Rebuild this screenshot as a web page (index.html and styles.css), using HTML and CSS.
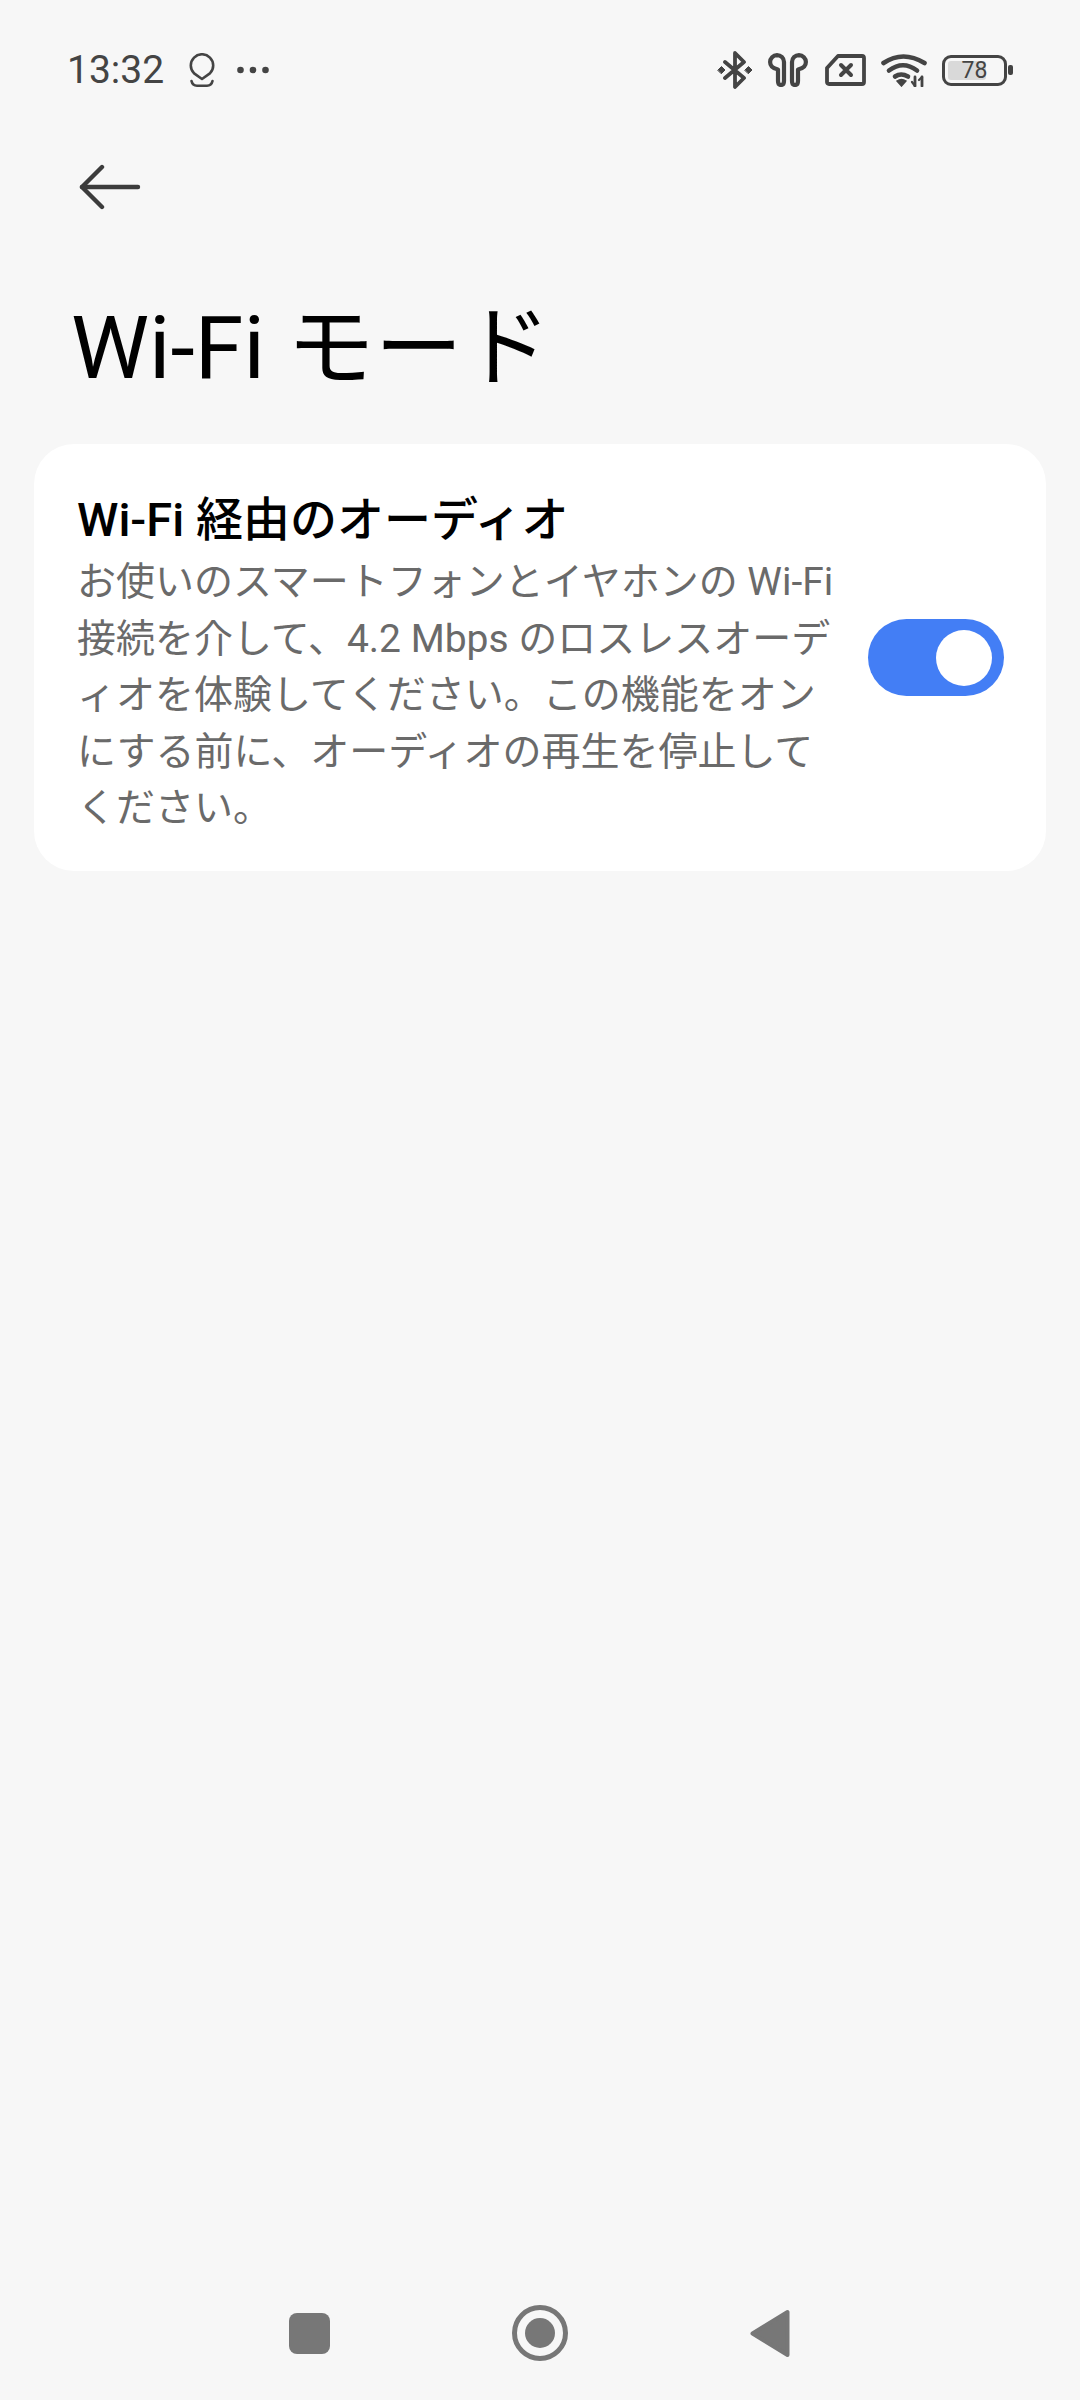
FILE: index.html
```html
<!DOCTYPE html>
<html lang="ja">
<head>
<meta charset="utf-8">
<title>Wi-Fi モード</title>
<link rel="stylesheet" href="styles.css">
</head>
<body>
<div class="screen">
  <header class="status">
    <div class="status-left">
      <span class="time">13:32</span>
      <svg class="ic-pin" width="26" height="34" viewBox="0 0 26 34" fill="none" stroke="#444" stroke-width="2.6" stroke-linecap="round" stroke-linejoin="round"><path d="M13 26 L5.100 20.400 A11.200 11.200 0 1 1 20.900 20.400 Z"/><path d="M2.500 28 Q3.500 32.700 8 32.700 H18 Q22.500 32.700 23.500 28"/></svg>
      <svg class="ic-dots" width="32" height="8" viewBox="0 0 32 8" fill="#444"><circle cx="3.500" cy="4" r="3.300"/><circle cx="16" cy="4" r="3.300"/><circle cx="28.500" cy="4" r="3.300"/></svg>
    </div>
    <div class="status-right">
      <svg width="36" height="38" viewBox="0 0 36 38" fill="none" stroke="#444" stroke-width="3.800" stroke-linejoin="round" stroke-linecap="round"><path d="M8 11 L27 27 L18 36 V2 L27 11 L8 27"/><path d="M1 19 l3.500-3.500 3.500 3.500-3.500 3.500z M28 19 l3.500-3.500 3.500 3.500-3.500 3.500z" fill="#444" stroke-width="1"/></svg>
      <svg width="40" height="34" viewBox="0 0 40 34" fill="none" stroke="#444" stroke-width="4.200" stroke-linecap="round" stroke-linejoin="round"><path d="M9 2.100 A7 7 0 0 0 2.100 9 C2.100 13 5 15.500 10 16.500 V28 Q10 32 13 32 Q16 32 16 28 V9 A7 7 0 0 0 9 2.100 Z"/><path d="M31 2.100 A7 7 0 0 1 37.900 9 C37.900 13 35 15.500 30 16.500 V28 Q30 32 27 32 Q24 32 24 28 V9 A7 7 0 0 1 31 2.100 Z"/></svg>
      <svg class="ic-sim" width="41" height="32" viewBox="0 0 41 32" fill="none" stroke="#444" stroke-width="3.800" stroke-linecap="round" stroke-linejoin="round"><path d="M13 2 H37 Q39 2 39 4 V28 Q39 30 37 30 H4 Q2 30 2 28 V14 Z"/><path d="M16 11 L26 21 M26 11 L16 21" stroke-width="4"/></svg>
      <svg width="46" height="34" viewBox="0 0 46 34" fill="none" stroke="#444" stroke-width="4.600" stroke-linecap="round"><path d="M2.500 10 Q22 -3 43.500 10"/><path d="M8 17.500 Q22 7 36 17.500"/><path d="M14 23.500 Q20 19.500 27 23.500"/><path d="M16 28 L20.500 33 L25 28 Q20.500 25 16 28Z" fill="#444" stroke-width="1.500"/><path d="M34 24 V33 M41 24 V33" stroke-width="2.800"/><path d="M31 29 L34 33 M38 27 L41 24" stroke-width="2.200"/></svg>
      <div class="battery">
        <div class="battery-body"><span class="battery-fill"></span><span class="battery-num">78</span></div>
        <span class="battery-cap"></span>
      </div>
    </div>
  </header>

  <nav class="topbar">
    <svg width="64" height="46" viewBox="0 0 64 46" fill="none" stroke="#3c3c3c" stroke-width="4.400" stroke-linecap="round" stroke-linejoin="round"><path d="M23 3 L3 23 L23 43"/><path d="M3 23 H59"/></svg>
  </nav>

  <h1 class="title">Wi-Fi モード</h1>

  <section class="card">
    <div class="card-text">
      <h2 class="card-title">Wi-Fi 経由のオーディオ</h2>
      <p class="card-desc">お使いのスマートフォンとイヤホンの Wi-Fi<br>接続を介して、4.2 Mbps のロスレスオーデ<br>ィオを体験してください。この機能をオン<br>にする前に、オーディオの再生を停止して<br>ください。</p>
    </div>
    <div class="toggle"><span class="knob"></span></div>
  </section>

  <footer class="navbar">
    <span class="nav-square"></span>
    <svg width="56" height="56" viewBox="0 0 56 56"><circle cx="28" cy="28" r="25.500" fill="none" stroke="#777" stroke-width="5"/><circle cx="28" cy="28" r="15" fill="#777"/></svg>
    <svg width="40" height="49" viewBox="0 0 40 49"><path d="M37.500 3 V46 L2.500 24.500 Z" fill="#777" stroke="#777" stroke-width="4" stroke-linejoin="round"/></svg>
  </footer>
</div>
</body>
</html>
```

FILE: styles.css
```css
* { box-sizing: border-box; }
html, body { margin: 0; padding: 0; }
body {
  background: #f7f7f7;
  font-family: Roboto, "Noto Sans CJK JP", sans-serif;
}
.screen {
  width: 1080px;
  height: 2400px;
  display: flex;
  flex-direction: column;
  background: #f7f7f7;
}
.status {
  height: 70px;
  margin-top: 35px;
  padding: 0 67px 0 67px;
  display: flex;
  align-items: center;
  justify-content: space-between;
}
.status-left { display: flex; align-items: center; }
.time { font-size: 39px; color: #444; width: 122px; }
.ic-pin { margin-right: 22px; }
.status-right { display: flex; align-items: center; gap: 15px; }
.ic-sim { margin-left: 2px; }
.battery { display: flex; align-items: center; gap: 1px; }
.battery-body {
  position: relative;
  width: 65px;
  height: 31px;
  border: 3.4px solid #444;
  border-radius: 9px;
  display: flex;
  align-items: center;
  justify-content: center;
}
.battery-fill {
  position: absolute;
  left: 3px;
  top: 3px;
  bottom: 3px;
  width: 38px;
  background: #d9d9d9;
  border-radius: 3px;
}
.battery-num { position: relative; font-size: 23px; color: #444; }
.battery-cap { width: 5px; height: 10px; background: #444; border-radius: 2px; }
.topbar {
  height: 46px;
  margin-top: 59px;
  padding-left: 79px;
  display: flex;
  align-items: center;
}
.title {
  margin: 89px 0 0 71px;
  font-size: 88px;
  line-height: 98px;
  font-weight: 400;
  color: #000;
}
.card {
  margin: 47px 34px 0;
  height: 427px;
  background: #fff;
  border-radius: 40px;
  padding: 42px 44px 0 43px;
  display: flex;
  align-items: flex-start;
  justify-content: space-between;
}
.card-title {
  margin: 0;
  font-size: 47px;
  line-height: 68px;
  font-weight: 500;
  color: #000;
}
.card-desc {
  margin: 0;
  font-size: 39px;
  line-height: 56.5px;
  color: #6a6a6a;
  white-space: nowrap;
}
.toggle {
  align-self: center;
  width: 136px;
  height: 77px;
  margin: -42px -2px 0 0;
  border-radius: 39px;
  background: #437ef5;
  display: flex;
  align-items: center;
  justify-content: flex-end;
  padding-right: 12px;
}
.knob { width: 56px; height: 56px; border-radius: 50%; background: #fff; }
.navbar {
  margin-top: auto;
  height: 56px;
  margin-bottom: 39px;
  padding: 0 290px 0 289px;
  display: flex;
  align-items: center;
  justify-content: space-between;
}
.nav-square { width: 41px; height: 41px; border-radius: 8px; background: #777; }
```
